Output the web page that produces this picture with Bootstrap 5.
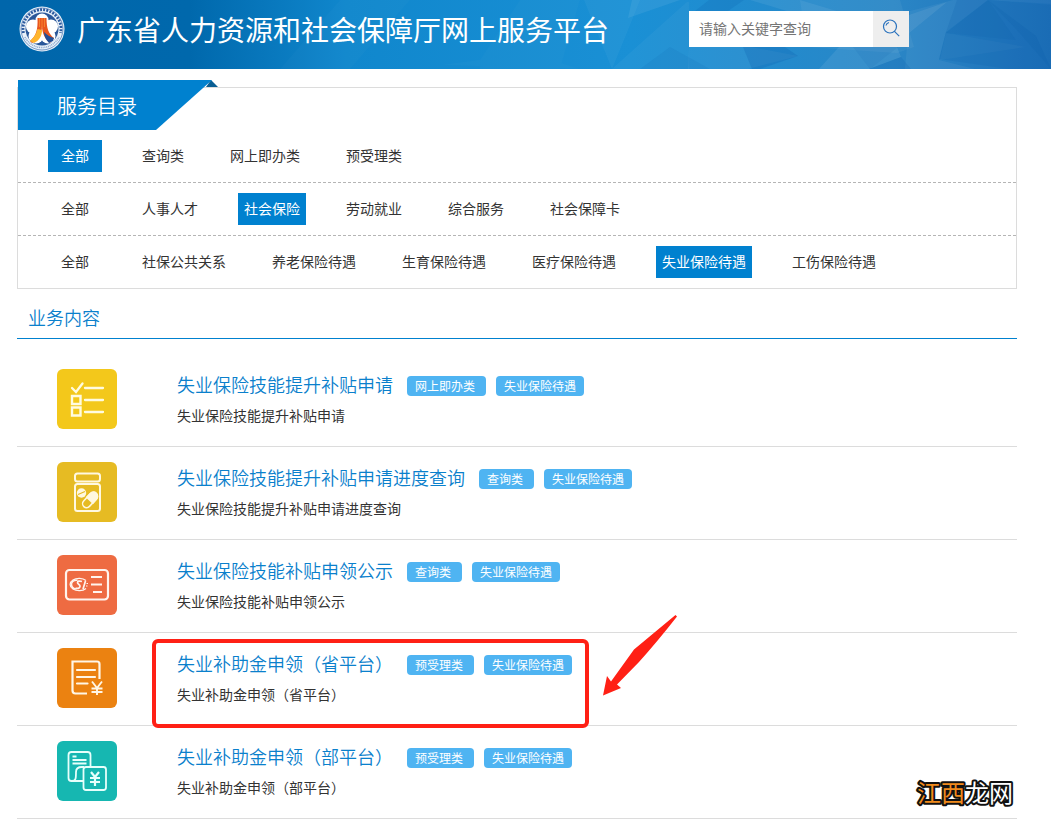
<!DOCTYPE html>
<html lang="zh-CN">
<head>
<meta charset="utf-8">
<meta name="viewport" content="width=device-width, initial-scale=1">
<title>广东省人力资源和社会保障厅网上服务平台</title>
<link href="https://cdn.jsdelivr.net/npm/bootstrap@5.3.0/dist/css/bootstrap.min.css" rel="stylesheet">
<style>
  :root { --brand: #0081cf; --line: #dcdcdc; }
  body { font-family: "Noto Sans CJK SC", "Liberation Sans", sans-serif; font-size: 14px; line-height: 20px; color: #333; background: #fff; }
  a { text-decoration: none; }
  .site-head { background: linear-gradient(90deg, #0066ab 0%, #0068ac 18%, #1087cd 33%, #1a90d5 60%, #2a86c6 85%, #1d6fb8 100%); }
  .head-art { inset: 0; width: 100%; height: 100%; }
  .head-bar { padding: 6px 17px 17px 19px; }
  .site-title { font-size: 28px; line-height: 46px; font-weight: 400; color: #fff; margin: 0 80px 0 12px; }
  .search-box { width: 220px; height: 36px; }
  .search-box input { min-width: 0; border: 0; padding: 0 10px 2px; line-height: 24px; color: #333; background: #fff; outline-offset: -2px; }
  .search-box input::placeholder { color: #757575; opacity: 1; line-height: 24px; }
  .search-box button { width: 36px; border: 0; padding: 0 0 2px; background: #eee; }
  .page-main { padding: 18px 34px 0 17px; }
  .catalog { border: 1px solid var(--line); }
  .catalog-tab { width: 200px; height: 50px; margin-top: -8px; }
  .catalog-tab .tab-face { height: 50px; padding-left: 39px; line-height: 52px; font-size: 20px; font-weight: 350; color: #fff; background: var(--brand); clip-path: polygon(0 0, 194px 0, 138px 50px, 0 50px); }
  .catalog-tab .tab-fold { left: 188px; top: 0; }
  .filter-row { gap: 34px; padding: 10px 30px; }
  .filter-row + .filter-row { border-top: 1px dashed #b5b5b5; }
  .filter-row li { display: flex; }
  .filter-row a { padding: 0 6px 2px; line-height: 30px; text-align: center; color: #333; }
  .filter-row li:first-child a { min-width: 54px; }
  .filter-row a.active { background: var(--brand); color: #fff; }
  .section-title { margin: 11px 0 15px; padding: 6px 11px 9px; font-size: 18px; line-height: 23px; font-weight: 350; color: #0a80cc; border-bottom: 1px solid var(--brand); }
  .service { padding: 15px 40px 17px; gap: 60px; border-bottom: 1px solid var(--line); }
  .service-icon { width: 60px; height: 60px; border-radius: 6px; flex: none; }
  .service-name { font-size: 18px; line-height: 30px; font-weight: 350; margin: 0 14px 0 0; }
  .service-name a { color: #0a80cc; }
  .tag { height: 20px; padding: 0 8px; border-radius: 4px; font-size: 12px; line-height: 20px; background: #4fb4f2; color: #fff; margin-top: 4px; }
  .tag-kind { padding-right: 11px; margin-right: 10px; }
  .service-desc { margin: 5px 0 0; line-height: 22px; }
  .callout-box { left: 135px; top: 6px; width: 437px; height: 89px; border: 4px solid #ff2015; border-radius: 6px; pointer-events: none; }
  .callout-arrow { left: 584px; top: -20px; pointer-events: none; }
  .site-mark { right: 0; bottom: 4px; }
  .site-mark text { font-size: 24px; font-weight: 400; stroke: #111; stroke-width: 4px; stroke-linejoin: round; paint-order: stroke; }
</style>
</head>
<body>
<header class="site-head position-relative overflow-hidden">
  <svg class="head-art position-absolute" viewBox="0 0 1051 69" preserveAspectRatio="none" aria-hidden="true">
    <g fill="#fff">
      <path opacity=".02" d="M340 0h70l-60 69h-70zM480 60l40-60h60l-20 69h-80zM440 65l90-12 50 16z"/>
      <path opacity=".04" d="M612 69l75-67 2 0v67zM640 0l-12 30-16 39-28-69z"/>
      <path opacity=".07" d="M632 0h48l-52 18zM750 0l50 0 50 15-60-3z"/>
      <path opacity=".05" d="M689 47l62 0 47 9-50 13h-60zM800 0h100l14 47-17 6-90-6z"/>
      <path opacity=".08" d="M897 47l4 10-32 12h-50l20-22zM909 33l38-31-38 13z"/>
      <path opacity=".05" d="M910 11l43-11 35 0-42 32-7 28 36 9h-70z"/>
      <path opacity=".03" d="M946 33l80 14-86 13zM1000 0h51v4l-63-4z"/>
    </g>
    <g fill="#0858a8">
      <path opacity=".22" d="M743 47h42l13 9-38 13h-8z"/>
      <path opacity=".15" d="M957 0l31 0 48 36 15 33h-42l-70-10 7-27z"/>
      <path opacity=".12" d="M988 0l63 5v64l-35-40zM946 33l42-33 28 40z"/>
      <path opacity=".16" d="M709 0l35 0-16 11h-33zM869 69l32-12 10 12z"/>
      <path opacity=".1" d="M853 47h45l-28 22zM640 69l30-22 40 22z"/>
    </g>
  </svg>
  <div class="head-bar position-relative d-flex align-items-center">
    <svg width="46" height="46" viewBox="0 0 46 46" class="flex-shrink-0" role="img" aria-label="徽标">
      <circle cx="23" cy="23" r="22.500" fill="#e8f0f8"/>
      <circle cx="23" cy="23" r="21" fill="none" stroke="#5c84bb" stroke-width=".8"/>
      <path d="M4.500 27a19 19 0 1 1 37 0" fill="none" stroke="#2c5a9f" stroke-width="2.800" stroke-dasharray="2 1.200"/>
      <path d="M6 31a19 19 0 0 0 34 0" fill="none" stroke="#8ba6cd" stroke-width="1.500" stroke-dasharray="1 .8"/>
      <circle cx="23" cy="23" r="16.500" fill="#2a5799"/>
      <g fill="#fff"><circle cx="23" cy="14" r="6.500"/><circle cx="14" cy="20.500" r="7"/><circle cx="32" cy="20.500" r="7"/><circle cx="17" cy="30" r="7.500"/><circle cx="29" cy="30" r="7.500"/><circle cx="23" cy="23" r="8"/></g>
      <path d="M18.500 12h4.500v8c0 8-4 14-10 17l-2-2c6-5 8-11 7.500-23z" fill="#e8561f"/>
      <path d="M18.500 23c-1 5-4 9-7.500 12l4 2c5-2 8-7 8-13z" fill="#ffb52d"/>
      <path d="M23 12h4.500c0 10 2 16 7.500 20l-4 5c-5-4-8-10-8-17z" fill="#e8561f"/>
      <path d="M25 26c3 3 6 5 10 6l-1 3-4 2c-3-3-5-7-5-11z" fill="#234f97"/>
      <path d="M20.500 12v9M23 12v10M25.500 12v9" stroke="#ffa03a" stroke-width=".6" fill="none"/>
    </svg>
    <h1 class="site-title text-nowrap">广东省人力资源和社会保障厅网上服务平台</h1>
    <form class="search-box d-flex flex-shrink-0" role="search" onsubmit="return false">
      <label class="visually-hidden" for="keyword">关键字</label>
      <input id="keyword" class="flex-grow-1 rounded-0" type="text" placeholder="请输入关键字查询">
      <button type="submit" aria-label="查询">
        <svg width="20" height="20" viewBox="0 0 20 20" fill="none" stroke="#2a72bd" stroke-width="1.200" aria-hidden="true"><circle cx="9" cy="7.500" r="6.500"/><path d="M5 6.500c.3-1.500 1.400-2.600 3-3M13.200 12.200l5 5"/></svg>
      </button>
    </form>
  </div>
</header>

<main class="page-main">
  <nav class="catalog" aria-label="服务目录">
    <div class="catalog-tab position-relative">
      <svg class="tab-fold position-absolute" width="12" height="7" viewBox="0 0 12 7" aria-hidden="true"><path d="M5 0l7 7H0z" fill="#0a5f94"/></svg>
      <h2 class="tab-face m-0 position-relative">服务目录</h2>
    </div>
    <ul class="filter-row list-unstyled d-flex flex-wrap m-0">
      <li><a href="#" class="active">全部</a></li><li><a href="#">查询类</a></li><li><a href="#">网上即办类</a></li><li><a href="#">预受理类</a></li>
    </ul>
    <ul class="filter-row list-unstyled d-flex flex-wrap m-0">
      <li><a href="#">全部</a></li><li><a href="#">人事人才</a></li><li><a href="#" class="active">社会保险</a></li><li><a href="#">劳动就业</a></li><li><a href="#">综合服务</a></li><li><a href="#">社会保障卡</a></li>
    </ul>
    <ul class="filter-row list-unstyled d-flex flex-wrap m-0">
      <li><a href="#">全部</a></li><li><a href="#">社保公共关系</a></li><li><a href="#">养老保险待遇</a></li><li><a href="#">生育保险待遇</a></li><li><a href="#">医疗保险待遇</a></li><li><a href="#" class="active">失业保险待遇</a></li><li><a href="#">工伤保险待遇</a></li>
    </ul>
  </nav>

  <h2 class="section-title">业务内容</h2>

  <article class="service d-flex">
    <svg class="service-icon" viewBox="0 0 60 60" fill="none" stroke="#fffbe0" stroke-width="2" aria-hidden="true"><rect width="60" height="60" fill="#f3c81b" stroke="none"/><path d="M15 19l4 4 6.500-8.500M28 19h18M28 31h18M28 43h18" stroke-width="2.300" stroke-linecap="round"/><path d="M15 27h8.500v8H15zM15 38.500h8.500v8H15z" stroke-width="2.400"/></svg>
    <div>
      <div class="d-flex align-items-center"><h3 class="service-name"><a href="#">失业保险技能提升补贴申请</a></h3><span class="tag tag-kind">网上即办类</span><span class="tag">失业保险待遇</span></div>
      <p class="service-desc">失业保险技能提升补贴申请</p>
    </div>
  </article>

  <article class="service d-flex">
    <svg class="service-icon" viewBox="0 0 60 60" fill="none" stroke="#fff8e0" stroke-width="2" aria-hidden="true"><rect width="60" height="60" fill="#e6bb23" stroke="none"/><rect x="18" y="11.500" width="25" height="8" rx="2.500"/><rect x="18" y="22" width="25" height="27" rx="2.500"/><circle cx="24.500" cy="31" r="4.700" fill="#fff8e0" stroke="none"/><path d="M21 32.500l7-3" stroke="#e6bb23" stroke-width="1.200"/><g transform="rotate(-47 33 38)"><rect x="24" y="34" width="18" height="8" rx="4" stroke-width="1.500"/><path d="M33 34h5a4 4 0 0 1 0 8h-5z" fill="#fff8e0"/></g></svg>
    <div>
      <div class="d-flex align-items-center"><h3 class="service-name"><a href="#">失业保险技能提升补贴申请进度查询</a></h3><span class="tag tag-kind">查询类</span><span class="tag">失业保险待遇</span></div>
      <p class="service-desc">失业保险技能提升补贴申请进度查询</p>
    </div>
  </article>

  <article class="service d-flex">
    <svg class="service-icon" viewBox="0 0 60 60" fill="none" stroke="#fff4ee" stroke-width="2.200" aria-hidden="true"><rect width="60" height="60" fill="#ee6b42" stroke="none"/><rect x="9" y="15" width="42" height="29.500" rx="3.500"/><path d="M34 22h11M34 29.500h11M36 37h9"/><path d="M29 25.500A9 6.200 0 1 0 29 33.500" stroke-width="1.300"/><path d="M20.500 25.300c-4-.5-6.500 2-6 4.700.4 2.300 2.500 4 5 4" stroke-width="1.600"/><path d="M25 26.500c-2.500-.8-4.500-.5-4.500 1.300 0 1.500 3 1.500 2.500 3.700-.4 2-2.500 2.300-4.500 1.600M28.500 26l-2.500 8" stroke-width="1.700"/><path d="M29.500 28.500h1.500M29 31h1.500" stroke-width="1"/></svg>
    <div>
      <div class="d-flex align-items-center"><h3 class="service-name"><a href="#">失业保险技能补贴申领公示</a></h3><span class="tag tag-kind">查询类</span><span class="tag">失业保险待遇</span></div>
      <p class="service-desc">失业保险技能补贴申领公示</p>
    </div>
  </article>

  <article class="service d-flex position-relative">
    <svg class="service-icon" viewBox="0 0 60 60" fill="none" stroke="#fff6e6" stroke-width="2.200" aria-hidden="true"><rect width="60" height="60" fill="#eb8211" stroke="none"/><path d="M30 45.500H18.500a3 3 0 0 1-3-3V13.500H40a2.500 2.500 0 0 1 2.500 2.500v15"/><path d="M20 22h18M20 29h18M20 35.500h10.500" stroke-linecap="round"/><path d="M35 33.500l5 6.500 5-6.500M40 40v7M34.500 40.500h11M34.500 44h11" stroke-width="1.900"/></svg>
    <div>
      <div class="d-flex align-items-center"><h3 class="service-name"><a href="#">失业补助金申领（省平台）</a></h3><span class="tag tag-kind">预受理类</span><span class="tag">失业保险待遇</span></div>
      <p class="service-desc">失业补助金申领（省平台）</p>
    </div>
    <div class="callout-box position-absolute"></div>
    <svg class="callout-arrow position-absolute" width="78" height="84" viewBox="0 0 78 84" aria-hidden="true"><path d="M74.500 2l1.500 1.500Q56 29 38 49L16 71.500l4 3.500L2 82.500 6 63l4 5.500 23-32Q54 19 74.500 2z" fill="#ff2015"/></svg>
  </article>

  <article class="service d-flex position-relative">
    <svg class="service-icon" viewBox="0 0 60 60" fill="none" stroke="#e6fffb" stroke-width="1.800" aria-hidden="true"><rect width="60" height="60" fill="#16b7b1" stroke="none"/><path d="M33.500 25V14a3 3 0 0 0-3-3h-16a3 3 0 0 0-3 3v23a3 3 0 0 0 3 3H26M15 40c4 0 4-3 4-9 0-4 3-5 6-5h2"/><path d="M15.500 15.500h4M15.500 19h14M15.500 22.500h14"/><rect x="26.500" y="26" width="22.500" height="23" rx="2.500"/><path d="M34 31l4 5 4-5M38 36v9M33 37h10M33 41h10" stroke-width="2.200"/></svg>
    <div>
      <div class="d-flex align-items-center"><h3 class="service-name"><a href="#">失业补助金申领（部平台）</a></h3><span class="tag tag-kind">预受理类</span><span class="tag">失业保险待遇</span></div>
      <p class="service-desc">失业补助金申领（部平台）</p>
    </div>
    <svg class="site-mark position-absolute" width="104" height="40" viewBox="0 0 104 40"><text x="4" y="28" fill="#fff"><tspan fill="#f08a1c">江西</tspan>龙网</text></svg>
  </article>
</main>
<script src="https://cdn.jsdelivr.net/npm/bootstrap@5.3.0/dist/js/bootstrap.bundle.min.js"></script>
</body>
</html>
